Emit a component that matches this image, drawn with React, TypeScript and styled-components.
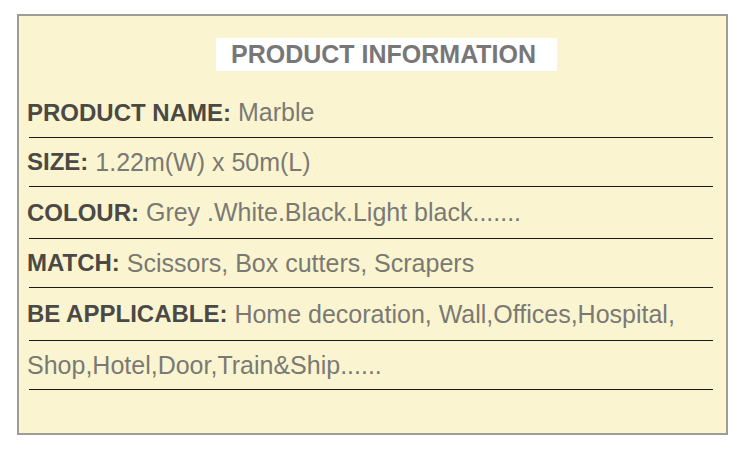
import * as React from 'react'
import styled, { createGlobalStyle } from 'styled-components'

const GlobalStyle = createGlobalStyle`
  html, body {
    margin: 0;
    padding: 0;
    background: #ffffff;
  }
  body {
    font-family: "Liberation Sans", Arial, sans-serif;
  }
`

const Page = styled.div`
  width: 750px;
  height: 457px;
  padding: 14px 0 0 17px;
  box-sizing: border-box;
`

const Frame = styled.div`
  width: 711px;
  height: 421px;
  box-sizing: border-box;
  border: 2px solid #9c9c98;
  background: #faf5d0;
  padding: 0 13px 0 9px;
  display: flex;
  flex-direction: column;
`

const Title = styled.h2`
  align-self: flex-start;
  margin: 22px 0 17px 188px;
  padding: 0 21px 0 15px;
  height: 33px;
  background: #ffffff;
  color: #777777;
  font-size: 25px;
  font-weight: 700;
  line-height: 33px;
  white-space: nowrap;
`

const Row = styled.div<{ $h: number }>`
  height: ${(p) => p.$h}px;
  border-bottom: 1px solid #1a1a1a;
  display: flex;
  align-items: center;
  font-size: 24px;
  white-space: nowrap;
  margin-left: 1px;
`

const Label = styled.span`
  color: #4a4945;
  font-weight: 700;
  margin-left: -2px;
`

const Value = styled.span<{ $solo?: boolean }>`
  color: #7a7974;
  font-size: 25px;
  white-space: pre;
  margin-left: ${(p) => (p.$solo ? '-2px' : '0')};
`

const rows: { label?: string; value: string; h: number }[] = [
  { label: 'PRODUCT NAME:', value: ' Marble', h: 49 },
  { label: 'SIZE:', value: ' 1.22m(W) x 50m(L)', h: 48 },
  { label: 'COLOUR:', value: ' Grey .White.Black.Light black.......', h: 51 },
  { label: 'MATCH:', value: ' Scissors, Box cutters, Scrapers', h: 48 },
  { label: 'BE APPLICABLE:', value: ' Home decoration, Wall,Offices,Hospital,', h: 52 },
  { value: 'Shop,Hotel,Door,Train&Ship......', h: 48 },
]

const App: React.FC = () => {
  return (
    <Page>
      <GlobalStyle />
      <Frame>
        <Title>PRODUCT INFORMATION</Title>
        {rows.map((r, i) => (
          <Row key={i} $h={r.h}>
            {r.label && <Label>{r.label}</Label>}
            <Value $solo={!r.label}>{r.value}</Value>
          </Row>
        ))}
      </Frame>
    </Page>
  )
}

export default App
